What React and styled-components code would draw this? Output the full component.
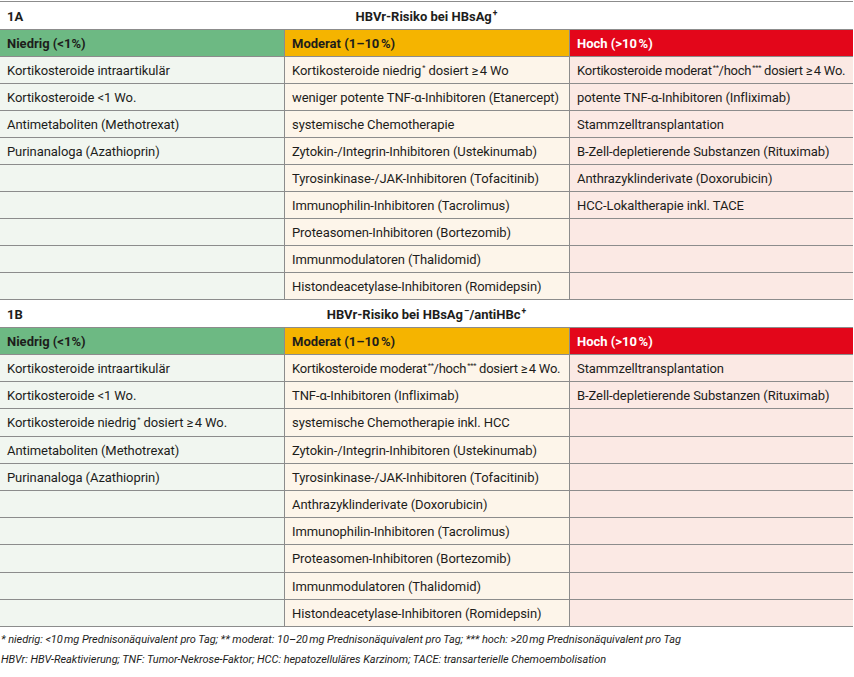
import React from 'react';
import styled, { createGlobalStyle } from 'styled-components';

const GlobalStyle = createGlobalStyle`
  body {
    margin: 0;
    background: #ffffff;
    font-family: Roboto, "Liberation Sans", sans-serif;
    color: #1d1d1b;
  }
`;

const Page = styled.div`
  width: 854px;
  padding-top: 1px;
`;

const Table = styled.div`
  display: grid;
  grid-template-columns: 285px 285px 283px;
  border-top: 1px solid #8c8c8c;
  border-right: 2px solid #8c8c8c;
  width: 853px;
  box-sizing: border-box;
`;

const TitleRow = styled.div`
  grid-column: 1 / -1;
  display: grid;
  grid-template-columns: 1fr auto 1fr;
  align-items: center;
  height: 28px;
  box-sizing: border-box;
  padding: 1px 7px 0;
  background: #ffffff;
  border-bottom: 1px solid #8c8c8c;
  font-size: 13px;
  font-weight: 700;
`;

const Sup = styled.sup`
  font-size: ${(p) => (p.$star ? 7.5 : 8.5)}px;
  letter-spacing: ${(p) => (p.$star ? '-0.3px' : '0')};
  vertical-align: 5px;
  line-height: 0;
  margin-left: 1px;
`;

const palette = {
  low: { head: '#6db983', cell: '#f1f6f0', text: '#1d1d1b' },
  mid: { head: '#f5b400', cell: '#fdf5ea', text: '#1d1d1b' },
  high: { head: '#e3061a', cell: '#fbe9e4', text: '#ffffff' },
};

const HeadCell = styled.div`
  display: flex;
  align-items: center;
  height: 27px;
  box-sizing: border-box;
  padding: 1px 7px 0;
  background: ${(p) => palette[p.$tone].head};
  color: ${(p) => palette[p.$tone].text};
  border-right: ${(p) => (p.$last ? 'none' : '1px solid #8c8c8c')};
  border-bottom: 1px solid #8c8c8c;
  font-size: 13px;
  font-weight: 700;
`;

const Cell = styled.div`
  display: block;
  line-height: ${(p) => p.$h - 2}px;
  height: ${(p) => p.$h}px;
  box-sizing: border-box;
  padding: 1px 6px 0 7px;
  background: ${(p) => palette[p.$tone].cell};
  border-right: ${(p) => (p.$last ? 'none' : '1px solid #8c8c8c')};
  border-bottom: 1px solid #8c8c8c;
  font-size: 13px;
  letter-spacing: -0.08px;
  white-space: nowrap;
`;

const Notes = styled.div`
  padding: 3px 0 0 1px;
  font-size: 11px;
  font-style: italic;
  line-height: 20px;
  letter-spacing: -0.05px;
`;

const ThinSp = '\u202F';

const tones = ['low', 'mid', 'high'];

const Star = ({ n }) => <Sup $star>{'*'.repeat(n)}</Sup>;

// long corticosteroid line, a touch tighter so it fits the cell
const Tight = styled.span`
  letter-spacing: -0.24px;
`;

const tableA = {
  id: '1A',
  title: (
    <>
      HBVr-Risiko bei HBsAg<Sup>+</Sup>
    </>
  ),
  rowH: 27,
  cols: [
    [
      'Kortikosteroide intraartikulär',
      'Kortikosteroide <1 Wo.',
      'Antimetaboliten (Methotrexat)',
      'Purinanaloga (Azathioprin)',
    ],
    [
      <>Kortikosteroide niedrig<Star n={1} /> dosiert ≥{ThinSp}4 Wo</>,
      'weniger potente TNF-α-Inhibitoren (Etanercept)',
      'systemische Chemotherapie',
      'Zytokin-/Integrin-Inhibitoren (Ustekinumab)',
      'Tyrosinkinase-/JAK-Inhibitoren (Tofacitinib)',
      'Immunophilin-Inhibitoren (Tacrolimus)',
      'Proteasomen-Inhibitoren (Bortezomib)',
      'Immunmodulatoren (Thalidomid)',
      'Histondeacetylase-Inhibitoren (Romidepsin)',
    ],
    [
      <Tight>Kortikosteroide moderat<Star n={2} />/hoch<Star n={3} /> dosiert ≥{ThinSp}4 Wo.</Tight>,
      'potente TNF-α-Inhibitoren (Infliximab)',
      'Stammzelltransplantation',
      'B-Zell-depletierende Substanzen (Rituximab)',
      'Anthrazyklinderivate (Doxorubicin)',
      'HCC-Lokaltherapie inkl. TACE',
    ],
  ],
  rows: 9,
};

const tableB = {
  id: '1B',
  title: (
    <>
      HBVr-Risiko bei HBsAg<Sup>–</Sup>/antiHBc<Sup>+</Sup>
    </>
  ),
  rowH: 27.2,
  cols: [
    [
      'Kortikosteroide intraartikulär',
      'Kortikosteroide <1 Wo.',
      <>Kortikosteroide niedrig<Star n={1} /> dosiert ≥{ThinSp}4 Wo.</>,
      'Antimetaboliten (Methotrexat)',
      'Purinanaloga (Azathioprin)',
    ],
    [
      <Tight>Kortikosteroide moderat<Star n={2} />/hoch<Star n={3} /> dosiert ≥{ThinSp}4 Wo.</Tight>,
      'TNF-α-Inhibitoren (Infliximab)',
      'systemische Chemotherapie inkl. HCC',
      'Zytokin-/Integrin-Inhibitoren (Ustekinumab)',
      'Tyrosinkinase-/JAK-Inhibitoren (Tofacitinib)',
      'Anthrazyklinderivate (Doxorubicin)',
      'Immunophilin-Inhibitoren (Tacrolimus)',
      'Proteasomen-Inhibitoren (Bortezomib)',
      'Immunmodulatoren (Thalidomid)',
      'Histondeacetylase-Inhibitoren (Romidepsin)',
    ],
    ['Stammzelltransplantation', 'B-Zell-depletierende Substanzen (Rituximab)'],
  ],
  rows: 10,
};

const headers = [
  'Niedrig (<1%)',
  `Moderat (1–10${ThinSp}%)`,
  `Hoch (>10${ThinSp}%)`,
];

const Section = ({ data }) => {
  const rows = [];
  for (let r = 0; r < data.rows; r++) {
    tones.forEach((tone, c) => {
      rows.push(
        <Cell key={`${r}-${c}`} $tone={tone} $last={c === 2} $h={data.rowH}>
          {data.cols[c][r] || ''}
        </Cell>
      );
    });
  }
  return (
    <>
      <TitleRow>
        <span>{data.id}</span>
        <span>{data.title}</span>
        <span />
      </TitleRow>
      {headers.map((h, i) => (
        <HeadCell key={h} $tone={tones[i]} $last={i === 2}>
          {h}
        </HeadCell>
      ))}
      {rows}
    </>
  );
};

export default function App() {
  return (
    <Page>
      <GlobalStyle />
      <Table>
        <Section data={tableA} />
        <Section data={tableB} />
      </Table>
      <Notes>
        <div>
          * niedrig: &lt;10{ThinSp}mg Prednisonäquivalent pro Tag; ** moderat: 10–20{ThinSp}mg
          Prednisonäquivalent pro Tag; *** hoch: &gt;20{ThinSp}mg Prednisonäquivalent pro Tag
        </div>
        <div>
          HBVr: HBV-Reaktivierung; TNF: Tumor-Nekrose-Faktor; HCC: hepatozelluläres Karzinom;
          TACE: transarterielle Chemoembolisation
        </div>
      </Notes>
    </Page>
  );
}
